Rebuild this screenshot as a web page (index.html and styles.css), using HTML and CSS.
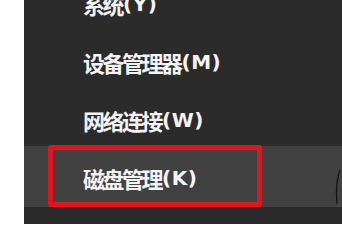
FILE: index.html
```html
<!DOCTYPE html>
<html lang="zh-CN">
<head>
<meta charset="utf-8">
<title>Win+X 菜单</title>
<link rel="stylesheet" href="styles.css">
</head>
<body>
<div class="screen">
  <div class="strip"></div>
  <div class="panel">
    <ul class="menu">
      <li class="item"><span class="cjk">系统</span><span class="key">(Y)</span></li>
      <li class="item"><span class="cjk">设备管理器</span><span class="key">(M)</span></li>
      <li class="item"><span class="cjk">网络连接</span><span class="key">(W)</span></li>
      <li class="item active"><span class="cjk">磁盘管理</span><span class="key">(K)</span><span class="mark"></span></li>
      <li class="item"><span class="cjk">计算机管理</span><span class="key">(G)</span></li>
    </ul>
    <svg class="cursor" width="8" height="36" viewBox="0 0 8 36"><path d="M6 0 Q1 14 3 34" fill="none" stroke="#111" stroke-width="1.2"/></svg>
  </div>
</div>
</body>
</html>
```
FILE: styles.css
```css
html, body {
  margin: 0;
  padding: 0;
  background: #ffffff;
}
.screen {
  width: 342px;
  height: 224px;
  overflow: hidden;
  display: flex;
}
.strip {
  width: 24px;
  flex: none;
  background: #ffffff;
}
.panel {
  flex: 1;
  background: #2b2b2b;
  position: relative;
  overflow: hidden;
}
.menu {
  list-style: none;
  margin: -25px 0 0 0;
  padding: 0;
}
.item {
  height: 58px;
  display: flex;
  align-items: center;
  padding-left: 59px;
  color: #f4f4f4;
  font-family: "Noto Sans CJK SC", "Noto Sans", sans-serif;
  font-size: 22px;
  font-weight: 600;
  box-sizing: border-box;
}
.cjk {
  letter-spacing: -2.5px;
}
.key {
  font-family: "DejaVu Sans", "Noto Sans", sans-serif;
  font-weight: bold;
  font-size: 20px;
  letter-spacing: 0.5px;
  margin-left: 1px;
}
.item.active {
  height: 61px;
  margin-top: -3px;
  padding-top: 3px;
  background: #414141;
  position: relative;
}
.mark {
  position: absolute;
  left: 24px;
  top: -1px;
  width: 214px;
  height: 62px;
  box-sizing: border-box;
  border: 5px solid #e3141c;
  border-radius: 3px;
}
.cursor {
  position: absolute;
  right: 0;
  top: 170px;
}
```
